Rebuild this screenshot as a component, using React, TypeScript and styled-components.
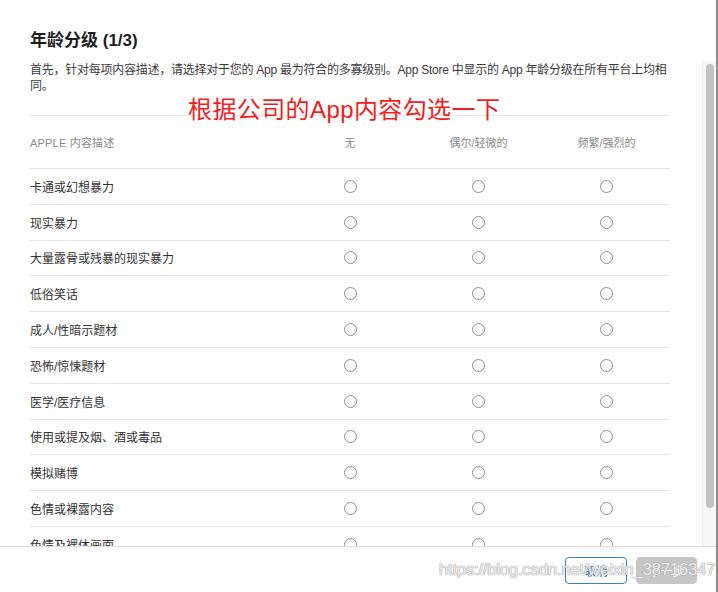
import React from "react";
import styled, { createGlobalStyle } from "styled-components";

const Global = createGlobalStyle`
  html, body { margin: 0; padding: 0; background: #ffffff; }
  body { font-family: "Liberation Sans", "Noto Sans CJK SC", sans-serif; }
  * { box-sizing: border-box; }
`;

const Page = styled.div`
  position: relative;
  width: 718px;
  height: 592px;
  background: #ffffff;
  border-right: 2px solid #8c8c8c;
  display: flex;
  flex-direction: column;
  overflow: hidden;
`;

const ScrollArea = styled.div`
  height: 546px;
  display: flex;
  flex-direction: row;
  overflow: hidden;
`;

const Content = styled.div`
  flex: 1;
  padding: 29px 30px 0 30px;
  display: flex;
  flex-direction: column;
  min-width: 0;
`;

const Track = styled.div`
  width: 14px;
  flex-shrink: 0;
  margin-top: 61px;
  background: #f8f8f8;
  border-left: 1px solid #ececec;
  padding: 3px 2px 0 3px;
`;

const Thumb = styled.div`
  height: 444px;
  border-radius: 4px;
  background: #c2c2c2;
`;

const Title = styled.h1`
  margin: 0;
  font-size: 17px;
  line-height: 24px;
  font-weight: 700;
  color: #1d1d1f;
`;

const Description = styled.p`
  margin: 9px 0 0 0;
  font-size: 12px;
  line-height: 16px;
  color: #3a3a3a;
  width: 652px;
  letter-spacing: -0.25px;
`;

const Table = styled.div`
  margin-top: 21px;
  width: 640px;
  border-top: 1px solid #e6e6e6;
`;

const Row = styled.div<{ $header?: boolean }>`
  display: grid;
  grid-template-columns: 256px 128px 129px 127px;
  align-items: center;
  height: ${(p) => (p.$header ? "53px" : "35.8px")};
  border-bottom: 1px solid #e6e6e6;
`;

const HeadLabel = styled.div`
  font-size: 11px;
  color: #8a8a8a;
  letter-spacing: 0.2px;
`;

const HeadCell = styled.div`
  font-size: 11px;
  color: #8a8a8a;
  text-align: center;
`;

const Label = styled.div`
  font-size: 12px;
  color: #333333;
`;

const Cell = styled.div`
  display: flex;
  justify-content: center;
  align-items: center;
`;

const Radio = styled.span`
  width: 13px;
  height: 13px;
  border-radius: 50%;
  border: 1px solid #8f8f8f;
  background: #ffffff;
`;

const Footer = styled.div`
  flex: 1;
  border-top: 1px solid #dedede;
  display: flex;
  justify-content: flex-end;
  align-items: center;
  gap: 9px;
  padding: 2px 19px 0 0;
`;

const Button = styled.button<{ $primary?: boolean }>`
  height: 27px;
  border-radius: 4px;
  font-family: "Liberation Sans", "Noto Sans CJK SC", sans-serif;
  font-size: 12px;
  padding: 0;
  width: ${(p) => (p.$primary ? "61px" : "62px")};
  border: 1px solid ${(p) => (p.$primary ? "#c6c6c6" : "#3d7cc6")};
  background: ${(p) => (p.$primary ? "#c6c6c6" : "#ffffff")};
  color: ${(p) => (p.$primary ? "#ffffff" : "#2a6cc0")};
`;

const Annotation = styled.div`
  position: absolute;
  left: 188px;
  top: 95px;
  font-family: "Liberation Sans", "Noto Sans CJK SC", sans-serif;
  font-size: 24px;
  line-height: 30px;
  color: #f21d1d;
  white-space: nowrap;
  letter-spacing: 0.4px;
`;

const Watermark = styled.div`
  position: absolute;
  left: 439px;
  top: 560px;
  font-family: "Liberation Sans", sans-serif;
  font-size: 17px;
  line-height: 20px;
  letter-spacing: -0.35px;
  color: rgba(255, 255, 255, 0.8);
  text-shadow: 0 0 1px #a8a8a8, 0 0 1px #a8a8a8, 0 0 1px #b0b0b0;
  white-space: nowrap;
  pointer-events: none;
`;

const items = [
  "卡通或幻想暴力",
  "现实暴力",
  "大量露骨或残暴的现实暴力",
  "低俗笑话",
  "成人/性暗示题材",
  "恐怖/惊悚题材",
  "医学/医疗信息",
  "使用或提及烟、酒或毒品",
  "模拟赌博",
  "色情或裸露内容",
  "色情及裸体画面",
  "无限制网页访问",
];

export default function App() {
  return (
    <>
      <Global />
      <Page>
        <ScrollArea>
          <Content>
            <Title>年龄分级 (1/3)</Title>
            <Description>
              首先，针对每项内容描述，请选择对于您的 App 最为符合的多寡级别。App Store 中显示的 App
              年龄分级在所有平台上均相同。
            </Description>
            <Table>
              <Row $header>
                <HeadLabel>APPLE 内容描述</HeadLabel>
                <HeadCell>无</HeadCell>
                <HeadCell>偶尔/轻微的</HeadCell>
                <HeadCell>频繁/强烈的</HeadCell>
              </Row>
              {items.map((it) => (
                <Row key={it}>
                  <Label>{it}</Label>
                  <Cell>
                    <Radio />
                  </Cell>
                  <Cell>
                    <Radio />
                  </Cell>
                  <Cell>
                    <Radio />
                  </Cell>
                </Row>
              ))}
            </Table>
          </Content>
          <Track>
            <Thumb />
          </Track>
        </ScrollArea>
        <Footer>
          <Button>取消</Button>
          <Button $primary>下一步</Button>
        </Footer>
        <Annotation>根据公司的App内容勾选一下</Annotation>
        <Watermark>https://blog.csdn.net/weixin_38716347</Watermark>
      </Page>
    </>
  );
}
